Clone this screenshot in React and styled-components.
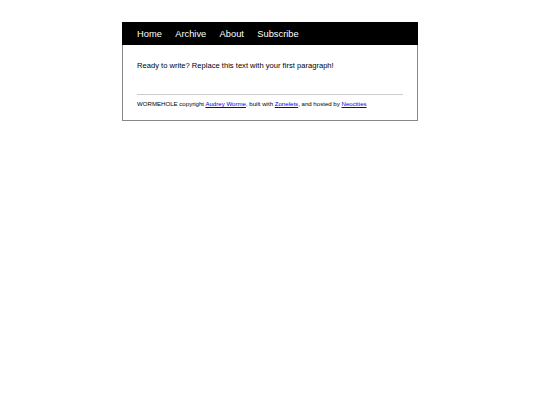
import styled, { createGlobalStyle } from 'styled-components'

const GlobalStyle = createGlobalStyle`
  html, body {
    margin: 0;
    padding: 0;
    background: #fff;
  }

  body {
    font-family: "Liberation Sans", Arial, sans-serif;
    color: #000;
  }
`

const Page = styled.div`
  width: 294px;
  margin: 22px auto 0;
  border: 1px solid #888;
  border-top: none;
  background: #fff;
`

const Nav = styled.nav`
  display: flex;
  align-items: center;
  gap: 13.4px;
  height: 23px;
  padding: 0 15px;
  margin: 0 -1px;
  background: #000;

  a {
    color: #fff;
    font-size: 9.3px;
    text-decoration: none;
  }
`

const Main = styled.main`
  padding: 16px 14px 13px;
`

const Paragraph = styled.p`
  margin: 0;
  font-size: 7.6px;
  line-height: 9px;
`

const Rule = styled.hr`
  margin: 24px 0 0;
  border: none;
  border-top: 1px solid #ccc;
`

const Footer = styled.footer`
  margin-top: 5px;
  font-size: 6.1px;
  line-height: 7px;

  a {
    color: #00e;
    text-decoration: underline;
  }
`

export default function App() {
  return (
    <>
      <GlobalStyle />
      <Page>
        <Nav>
          <a href="#">Home</a>
          <a href="#">Archive</a>
          <a href="#">About</a>
          <a href="#">Subscribe</a>
        </Nav>
        <Main>
          <Paragraph>Ready to write? Replace this text with your first paragraph!</Paragraph>
          <Rule />
          <Footer>
            WORMEHOLE copyright <a href="#">Audrey Worme</a>, built with{' '}
            <a href="#">Zonelets</a>, and hosted by <a href="#">Neocities</a>
          </Footer>
        </Main>
      </Page>
    </>
  )
}
